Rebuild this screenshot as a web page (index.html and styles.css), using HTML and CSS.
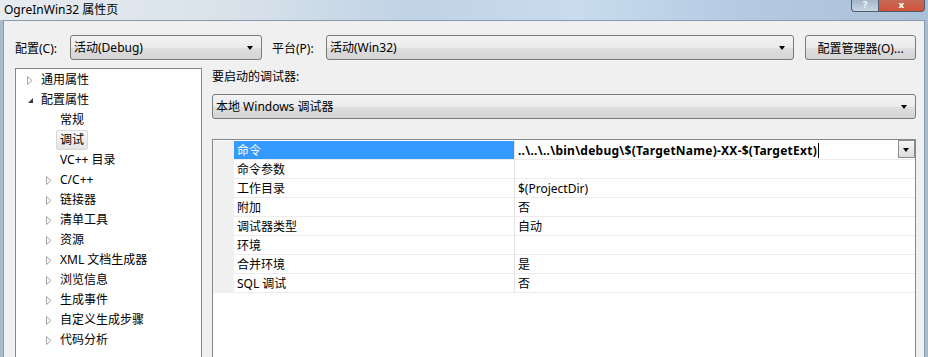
FILE: index.html
```html
<!DOCTYPE html>
<html>
<head>
    <title>OgreInWin32 属性页</title>
    <link rel="stylesheet" href="styles.css">
</head>
<body>
    <div class="window">
        <div class="titlebar">
            <span class="title">OgreInWin32 属性页</span>
            <div class="caption-buttons">
                <span class="cap-btn help">?</span>
                <span class="cap-btn close">x</span>
            </div>
        </div>
        <div class="client">
            <div class="top-row">
                <span class="label label-config">配置(C):</span>
                <div class="combo combo-config">活动(Debug)<span class="arrow"></span></div>
                <span class="label label-platform">平台(P):</span>
                <div class="combo combo-platform">活动(Win32)<span class="arrow"></span></div>
                <button class="button">配置管理器(O)...</button>
            </div>
            <div class="main">
                <div class="tree">
                    <div class="node level-1">
                        <span class="expander"><svg width="6" height="9" viewBox="0 0 6 9"><path d="M0.5 0.5 L5 4.5 L0.5 8.5 Z" fill="#fff" stroke="#a6a6a6"/></svg></span>
                        <span class="node-text">通用属性</span>
                    </div>
                    <div class="node level-1">
                        <span class="expander"><svg width="7" height="7" viewBox="0 0 7 7"><path d="M6 1 L6 6 L1 6 Z" fill="#3c3c3c"/></svg></span>
                        <span class="node-text">配置属性</span>
                    </div>
                    <div class="node level-2">
                        <span class="expander"></span>
                        <span class="node-text">常规</span>
                    </div>
                    <div class="node level-2">
                        <span class="expander"></span>
                        <span class="node-text selected">调试</span>
                    </div>
                    <div class="node level-2">
                        <span class="expander"></span>
                        <span class="node-text">VC++ 目录</span>
                    </div>
                    <div class="node level-2">
                        <span class="expander"><svg width="6" height="9" viewBox="0 0 6 9"><path d="M0.5 0.5 L5 4.5 L0.5 8.5 Z" fill="#fff" stroke="#a6a6a6"/></svg></span>
                        <span class="node-text">C/C++</span>
                    </div>
                    <div class="node level-2">
                        <span class="expander"><svg width="6" height="9" viewBox="0 0 6 9"><path d="M0.5 0.5 L5 4.5 L0.5 8.5 Z" fill="#fff" stroke="#a6a6a6"/></svg></span>
                        <span class="node-text">链接器</span>
                    </div>
                    <div class="node level-2">
                        <span class="expander"><svg width="6" height="9" viewBox="0 0 6 9"><path d="M0.5 0.5 L5 4.5 L0.5 8.5 Z" fill="#fff" stroke="#a6a6a6"/></svg></span>
                        <span class="node-text">清单工具</span>
                    </div>
                    <div class="node level-2">
                        <span class="expander"><svg width="6" height="9" viewBox="0 0 6 9"><path d="M0.5 0.5 L5 4.5 L0.5 8.5 Z" fill="#fff" stroke="#a6a6a6"/></svg></span>
                        <span class="node-text">资源</span>
                    </div>
                    <div class="node level-2">
                        <span class="expander"><svg width="6" height="9" viewBox="0 0 6 9"><path d="M0.5 0.5 L5 4.5 L0.5 8.5 Z" fill="#fff" stroke="#a6a6a6"/></svg></span>
                        <span class="node-text">XML 文档生成器</span>
                    </div>
                    <div class="node level-2">
                        <span class="expander"><svg width="6" height="9" viewBox="0 0 6 9"><path d="M0.5 0.5 L5 4.5 L0.5 8.5 Z" fill="#fff" stroke="#a6a6a6"/></svg></span>
                        <span class="node-text">浏览信息</span>
                    </div>
                    <div class="node level-2">
                        <span class="expander"><svg width="6" height="9" viewBox="0 0 6 9"><path d="M0.5 0.5 L5 4.5 L0.5 8.5 Z" fill="#fff" stroke="#a6a6a6"/></svg></span>
                        <span class="node-text">生成事件</span>
                    </div>
                    <div class="node level-2">
                        <span class="expander"><svg width="6" height="9" viewBox="0 0 6 9"><path d="M0.5 0.5 L5 4.5 L0.5 8.5 Z" fill="#fff" stroke="#a6a6a6"/></svg></span>
                        <span class="node-text">自定义生成步骤</span>
                    </div>
                    <div class="node level-2">
                        <span class="expander"><svg width="6" height="9" viewBox="0 0 6 9"><path d="M0.5 0.5 L5 4.5 L0.5 8.5 Z" fill="#fff" stroke="#a6a6a6"/></svg></span>
                        <span class="node-text">代码分析</span>
                    </div>
                </div>
                <div class="page">
                    <div class="page-label">要启动的调试器:</div>
                    <div class="combo combo-debugger">本地 Windows 调试器<span class="arrow"></span></div>
                    <div class="grid">
                        <div class="grid-row active">
                            <div class="gutter"></div>
                            <div class="cell name">命令</div>
                            <div class="cell value">
                                <span class="bold">..\..\..\bin\debug\$(TargetName)-XX-$(TargetExt)</span><span class="caret"></span>
                                <span class="drop-btn"><span class="drop-arrow"></span></span>
                            </div>
                        </div>
                        <div class="grid-row">
                            <div class="gutter"></div>
                            <div class="cell name">命令参数</div>
                            <div class="cell value"></div>
                        </div>
                        <div class="grid-row">
                            <div class="gutter"></div>
                            <div class="cell name">工作目录</div>
                            <div class="cell value">$(ProjectDir)</div>
                        </div>
                        <div class="grid-row">
                            <div class="gutter"></div>
                            <div class="cell name">附加</div>
                            <div class="cell value">否</div>
                        </div>
                        <div class="grid-row">
                            <div class="gutter"></div>
                            <div class="cell name">调试器类型</div>
                            <div class="cell value">自动</div>
                        </div>
                        <div class="grid-row">
                            <div class="gutter"></div>
                            <div class="cell name">环境</div>
                            <div class="cell value"></div>
                        </div>
                        <div class="grid-row">
                            <div class="gutter"></div>
                            <div class="cell name">合并环境</div>
                            <div class="cell value">是</div>
                        </div>
                        <div class="grid-row">
                            <div class="gutter"></div>
                            <div class="cell name">SQL 调试</div>
                            <div class="cell value">否</div>
                        </div>
                    </div>
                </div>
            </div>
        </div>
    </div>
</body>
</html>
```

FILE: styles.css
```css
body {
    margin: 0;
    overflow: hidden;
    font-family: "Noto Sans", "Noto Sans CJK SC", sans-serif;
    font-size: 12px;
    color: #000;
    background: linear-gradient(to right, #a9bccf, #b9cde2 50%, #a7bcd3);
}
.window {
    width: 928px;
    height: 357px;
    overflow: hidden;
}
.titlebar {
    height: 20px;
    display: flex;
    justify-content: space-between;
    background: linear-gradient(to right, #e6ebf0 0%, #d9e2ea 25%, #bfd2e6 45%, #c9dcef 62%, #b3cae1 80%, #a9c0d8 100%);
}
.title {
    padding-left: 4px;
    line-height: 19px;
}
.caption-buttons {
    display: flex;
    margin-right: 3px;
    height: 12px;
}
.cap-btn {
    display: block;
    height: 11px;
    border: 1px solid #4e5d6e;
    border-top: none;
    text-align: center;
    font-family: "DejaVu Sans", sans-serif;
    font-size: 9px;
    line-height: 10px;
    font-weight: bold;
    color: #fff;
}
.help {
    width: 26px;
    border-radius: 0 0 0 4px;
    background: linear-gradient(#a5b5c8, #c8d5e3);
    color: #eef2f6;
}
.close {
    width: 45px;
    border-left: none;
    border-radius: 0 0 4px 0;
    background: linear-gradient(#c56a57, #d2523b);
}
.client {
    margin: 0 3px;
    height: 337px;
    border: 1px solid #8a9aab;
    border-bottom: none;
    background: #f0f0f0;
    padding: 14px 8px 0 11px;
}
.top-row {
    display: flex;
    align-items: center;
    height: 25px;
}
.label {
    white-space: nowrap;
}
.label-config {
    width: 55px;
}
.label-platform {
    width: 54px;
    margin-left: 10px;
}
.combo {
    position: relative;
    box-sizing: border-box;
    height: 25px;
    line-height: 23px;
    padding-left: 3px;
    border: 1px solid #7a7a7a;
    border-radius: 3px;
    background: linear-gradient(#f3f3f3 0%, #ebebeb 50%, #dfdfdf 51%, #d3d3d3 100%);
    white-space: nowrap;
}
.arrow {
    position: absolute;
    right: 8px;
    top: 10px;
    border-left: 3.5px solid transparent;
    border-right: 3.5px solid transparent;
    border-top: 4px solid #000;
}
.combo-config {
    width: 192px;
}
.combo-platform {
    width: 468px;
}
.button {
    box-sizing: border-box;
    width: 111px;
    height: 25px;
    margin-left: 11px;
    padding: 0;
    border: 1px solid #7a7a7a;
    border-radius: 3px;
    background: linear-gradient(#f3f3f3 0%, #ebebeb 50%, #dfdfdf 51%, #d3d3d3 100%);
    font-family: inherit;
    font-size: 12px;
    color: #000;
}
.main {
    display: flex;
    margin-top: 8px;
}
.tree {
    box-sizing: border-box;
    width: 187px;
    height: 300px;
    padding-top: 1px;
    border: 1px solid #828790;
    background: #fff;
}
.node {
    display: flex;
    align-items: center;
    height: 20px;
}
.level-1 {
    padding-left: 10px;
}
.level-2 {
    padding-left: 29px;
}
.expander {
    display: flex;
    align-items: center;
    width: 15px;
    height: 20px;
    padding-left: 1px;
    box-sizing: border-box;
}
.node-text {
    line-height: 18px;
    white-space: nowrap;
}
.selected {
    margin-left: -4px;
    padding: 0 3px;
    border: 1px solid #d9d9d9;
    border-radius: 2px;
    background: linear-gradient(#f7f7f7, #e5e5e5);
}
.page {
    width: 704px;
    margin-left: 10px;
}
.page-label {
    line-height: 18px;
}
.combo-debugger {
    width: 704px;
    margin-top: 8px;
}
.grid {
    box-sizing: border-box;
    height: 240px;
    margin-top: 20px;
    padding-top: 1px;
    border: 1px solid #828790;
    background: #fff;
}
.grid-row {
    display: flex;
    height: 19px;
}
.gutter {
    width: 21px;
    background: #f0f0f0;
}
.cell {
    box-sizing: border-box;
    height: 19px;
    padding-top: 1px;
    line-height: 18px;
    border-bottom: 1px solid #ececec;
    white-space: nowrap;
}
.name {
    width: 281px;
    padding-left: 3px;
    border-right: 1px solid #e3e3e3;
}
.value {
    position: relative;
    flex: 1;
    padding-left: 3px;
}
.active .name {
    background: #3399ff;
    color: #fff;
}
.bold {
    font-weight: bold;
    letter-spacing: 0.25px;
}
.caret {
    display: inline-block;
    width: 1px;
    height: 15px;
    margin-left: 1px;
    vertical-align: -3px;
    background: #000;
}
.drop-btn {
    position: absolute;
    right: 0;
    top: -1px;
    box-sizing: border-box;
    width: 17px;
    height: 18px;
    border: 1px solid #8c8c8c;
    background: linear-gradient(#f6f6f6, #dcdcdc);
}
.drop-arrow {
    position: absolute;
    left: 4px;
    top: 7px;
    border-left: 3.5px solid transparent;
    border-right: 3.5px solid transparent;
    border-top: 4px solid #000;
}
```
